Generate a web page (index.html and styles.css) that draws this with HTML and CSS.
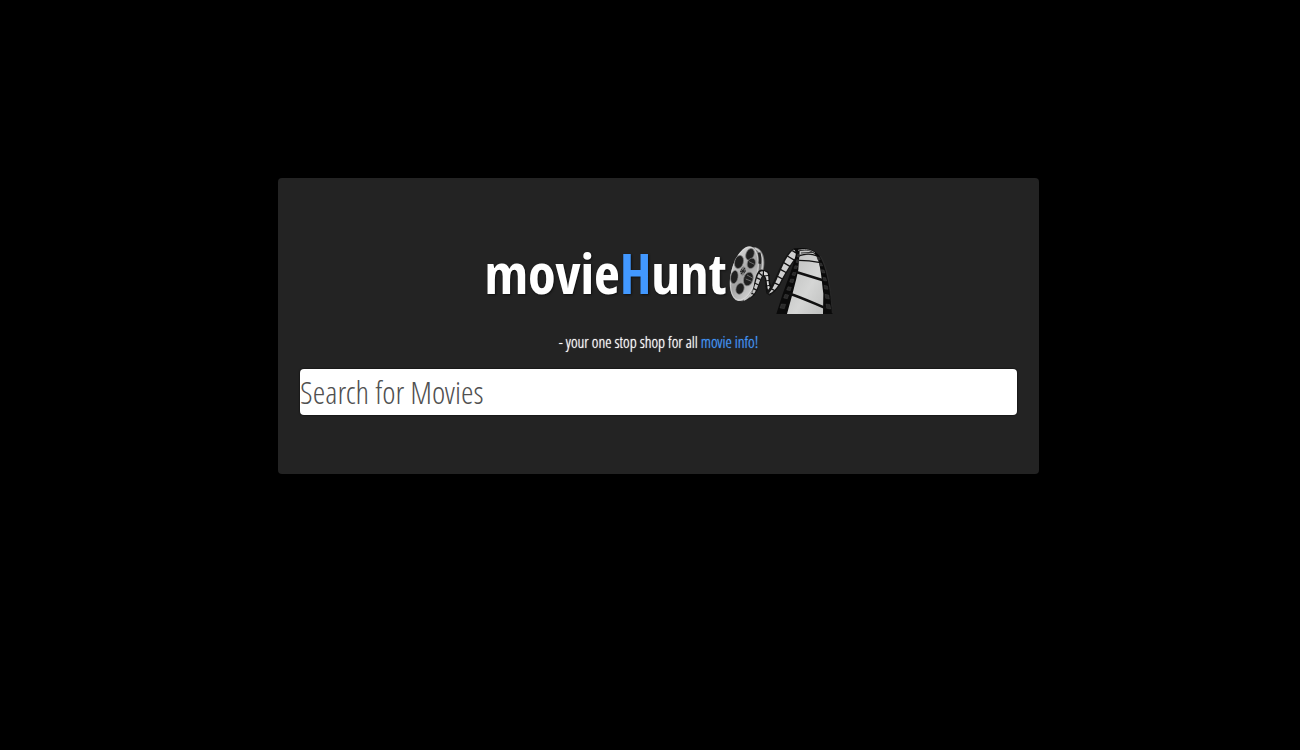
FILE: index.html
```html
<!DOCTYPE html>
<html lang="en">
<head>
<meta charset="utf-8">
<meta name="viewport" content="width=device-width, initial-scale=1">
<title>movieHunt</title>
<link rel="stylesheet" href="styles.css">
</head>
<body>
<main class="card">
  <header class="brand">
    <h1 class="title">movie<span class="accent">H</span>unt</h1>
    <svg class="reel" viewBox="24 33 312 204" aria-hidden="true">
      <defs>
        <linearGradient id="metal" x1="0" y1="0" x2="1" y2="1">
          <stop offset="0" stop-color="#e6e6e6"/><stop offset=".5" stop-color="#a2a2a2"/><stop offset="1" stop-color="#dedede"/>
        </linearGradient>
        <linearGradient id="frame" x1="0" y1="0" x2="1" y2="1">
          <stop offset="0" stop-color="#b9bab9"/><stop offset=".6" stop-color="#d5d6d5"/><stop offset="1" stop-color="#bfc0bf"/>
        </linearGradient>
      </defs>
      <path d="M99 36C117 37 132 56 130 87C128 133 99 188 64 199L50 197L85 40Z" fill="#777"/>
      <path d="M101 40C119 45 128 66 124 96C119 139 95 180 69 195" fill="none" stroke="#c8c8c8" stroke-width="5"/>
      <ellipse cx="70" cy="116" rx="40" ry="84" transform="rotate(14 70 116)" fill="url(#metal)"/>
      <ellipse cx="70" cy="116" rx="38" ry="81" transform="rotate(14 70 116)" fill="none" stroke="#ddd" stroke-width="2"/>
      <g fill="#202020" stroke="#818181" stroke-width="2">
        <ellipse cx="87" cy="58" rx="12" ry="18" transform="rotate(22 87 58)"/>
        <ellipse cx="54" cy="81" rx="13" ry="20" transform="rotate(16 54 81)"/>
        <ellipse cx="91" cy="85" rx="12" ry="16" transform="rotate(20 91 85)"/>
        <ellipse cx="40" cy="126" rx="11" ry="20" transform="rotate(10 40 126)"/>
        <ellipse cx="82" cy="132" rx="14" ry="21" transform="rotate(17 82 132)"/>
        <ellipse cx="57" cy="161" rx="12" ry="17" transform="rotate(17 57 161)"/>
        <ellipse cx="66" cy="108" rx="7" ry="13" transform="rotate(14 66 108)" fill="#777"/>
      </g>
      <path d="M61 103L71 114M71 99L61 117M57 109L75 108" stroke="#222" stroke-width="3"/>
      <path d="M74 132L92 139M78 120L96 130M84 80L100 88" stroke="#686868" stroke-width="3"/>
      <path d="M114 53Q119 68 116 86" fill="none" stroke="#242424" stroke-width="8"/>

      <path d="M86 190C98 172 97 148 104 127C109 108 119 99 128 106L127 124C120 130 117 150 108 167C100 183 90 192 78 196Z" fill="#151515"/>
      <path d="M84 190C98 172 101 150 107 131C112 116 119 106 126 110L124 122C118 128 114 148 106 164C99 178 91 187 79 192Z" fill="#c9c9c9"/>
      <path d="M91 174L102 180M97 160L109 167M101 144L113 150M106 128L119 134M113 113L124 122" stroke="#161616" stroke-width="4"/>
      <path d="M126 104L142 110C149 122 142 146 156 162L149 181L137 176C130 154 138 130 126 123Z" fill="#111"/>
      <path d="M129 108L139 113C145 127 139 149 151 166L145 175C134 152 142 131 129 120Z" fill="#d8d8d8"/>
      <path d="M129 123L146 121M132 138L147 136M133 154L150 150" stroke="#111" stroke-width="3"/>
      <path d="M145 182L136 172L149 154C172 119 185 58 220 39L243 41L234 65C212 80 192 123 178 149C165 168 155 176 145 182Z" fill="#151515"/>
      <path d="M143 176C154 164 160 148 167 134C181 104 194 63 218 44L231 47L228 64C210 81 189 121 175 146C164 162 154 173 143 176Z" fill="#cfcfcf"/>
      <path d="M149 160L163 168M159 143L176 151M168 123L186 133M178 103L198 114M188 83L208 95M199 63L221 76M214 47L232 58" stroke="#131313" stroke-width="4"/>

      <path d="M219 41C248 36 275 40 294 61C312 88 320 135 329 174L335 237L166 237L184 180C201 132 219 88 225 55Z" fill="#0a0a0a"/>
      <path d="M236 48C255 43 277 49 286 63C300 89 302 139 307 176L306 237L198 237C212 186 224 142 232 104Z" fill="url(#frame)"/>
      <path d="M235 62C258 54 275 57 288 63M234 76Q265 76 294 82" fill="none" stroke="#101010" stroke-width="4"/>
      <path d="M223 110L306 136M205 176C239 186 270 201 315 220" fill="none" stroke="#101010" stroke-width="8"/>
      <path d="M231 46C252 40 271 46 282 54" stroke="#8f8f8f" fill="none" stroke-width="3"/>
      <path d="M240 54L276 52" stroke="#333" stroke-width="3"/>
      <g fill="#292929" stroke="#505050" stroke-width="1">
        <path d="M230 58L237 59L236 66L228 65ZM227 74L235 75L233 83L225 82ZM222 92L230 93L227 101L219 100ZM216 112L225 113L222 122L213 120ZM209 132L219 133L216 143L206 141ZM201 155L211 157L208 167L197 165ZM192 178L203 180L199 191L188 189ZM181 207L194 208L190 221L177 219Z"/>
        <path d="M288 66L295 67L298 74L290 74ZM295 84L302 85L305 93L297 92ZM301 104L309 105L312 114L303 113ZM306 127L314 128L317 138L308 137ZM309 151L319 153L321 163L311 162ZM312 178L323 180L325 192L314 190ZM315 207L327 209L329 222L317 220Z"/>
      </g>
      <path d="M298 63C315 91 327 137 334 235" fill="none" stroke="#343434" stroke-width="2"/>
    </svg>
  </header>
  <p class="tagline">- your one stop shop for all <span class="accent">movie info!</span></p>
  <form class="search">
    <input class="search-box" type="search" placeholder="Search for Movies" aria-label="Search for Movies">
  </form>
</main>
</body>
</html>
```
FILE: styles.css
```css
* {
  box-sizing: border-box;
}

body {
  margin: 0;
  padding: 178px 0 0 17px;
  background: #000;
  color: #fff;
  font-family: "Open Sans Condensed Light", "Liberation Sans Narrow", "Liberation Sans", sans-serif;
  font-weight: 300;
}

.card {
  width: 59.3%;
  margin: 0 auto;
  padding: 68px 22px 59px;
  border-radius: 4px;
  background: #232323;
}

.brand {
  display: flex;
  justify-content: center;
  gap: 2px;
}

.title {
  margin: 0;
  font-family: "Open Sans Condensed", "Liberation Sans Narrow", "Liberation Sans", sans-serif;
  font-size: 56px;
  line-height: 52px;
  font-weight: 700;
  text-shadow: 1px 1px 2px #111;
}

.accent {
  color: #4298ff;
}

.reel {
  width: 104px;
  height: 68px;
}

.tagline {
  margin: 18px 0 16px;
  font-size: 16px;
  line-height: 21px;
  text-align: center;
  text-shadow: 0 0 1px currentColor;
}

.search {
  display: flex;
}

.search-box {
  flex: 1;
  min-width: 0;
  height: 46px;
  padding: 0 0 2px;
  border: 0;
  border-radius: 4px;
  background: #fff;
  box-shadow: 0 0 2px #000;
  color: #333;
  font-family: inherit;
  font-size: 32px;
  font-weight: 300;
  appearance: none;
}

.search-box::placeholder {
  color: #505050;
  opacity: 1;
}
```
